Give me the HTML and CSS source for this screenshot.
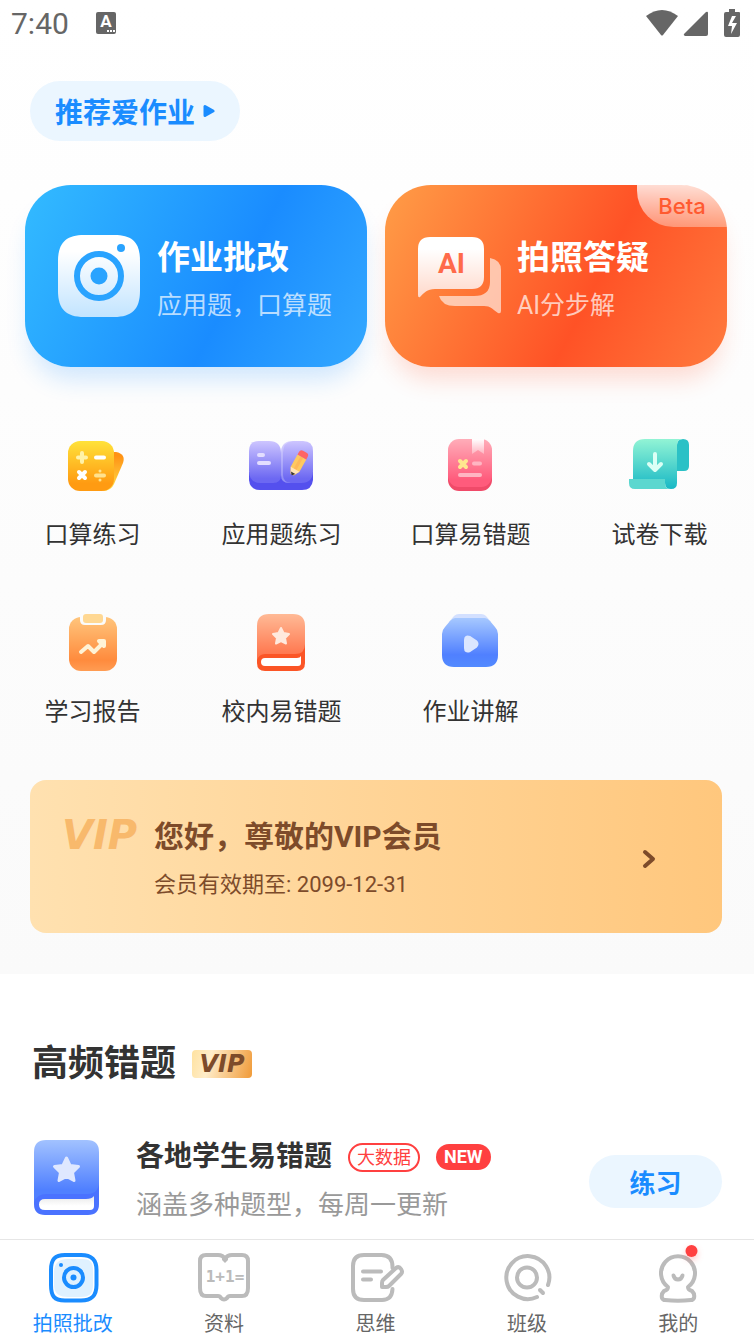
FILE: index.html
```html
<!DOCTYPE html>
<html lang="zh-CN">
<head>
    <meta charset="UTF-8">
    <meta name="viewport" content="width=device-width, initial-scale=1.0">
    <title>爱作业</title>
    <link rel="stylesheet" href="styles.css">
</head>
<body>
    <div class="top">
        <div class="status-bar">
            <span class="clock">7:40</span>
            <svg class="status-app" width="20" height="24" viewBox="0 0 20 24">
                <rect x="0" y="1" width="20" height="22" rx="2" fill="#666"/>
                <text x="10" y="16" text-anchor="middle" class="app-letter">A</text>
                <path d="M11 20h2M14 20h2M17 20h2" stroke="#fff" stroke-width="2"/>
            </svg>
            <svg class="status-icons" width="96" height="30" viewBox="0 0 96 30">
                <path d="M0 8Q16 -4 32 8L17 27q-1 1-2 0z" fill="#666"/>
                <path d="M62 5v21q0 2-2 2H39q-2-1-1-2L60 4q2-1 2 1z" fill="#666"/>
                <path d="M83 1h6v3h4q1 0 1 1v22q0 2-2 2H80q-2 0-2-2V6q0-2 2-2h3z" fill="#666"/>
                <path d="M86 8l-4 10h4l-1 8 6-11h-5l4-7z" fill="#fff"/>
            </svg>
        </div>

        <header class="header">
            <button class="recommend">推荐爱作业
                <svg width="12" height="14" viewBox="0 0 12 14"><path d="M2 2.500v9L10 7z" fill="#1a8cff" stroke="#1a8cff" stroke-width="3" stroke-linejoin="round"/></svg>
            </button>
        </header>

        <div class="cards">
            <button class="card card-blue">
                <svg width="84" height="84" viewBox="0 0 84 84">
                    <defs>
                        <linearGradient id="camFill" x1="0" y1="0" x2="0" y2="1">
                            <stop offset="0.2" stop-color="#fff"/>
                            <stop offset="1" stop-color="#c2e4ff"/>
                        </linearGradient>
                    </defs>
                    <path d="M27 1h30c19 0 26 8 26 26v30c0 18-8 26-26 26H27C9 83 1 75 1 57V27C1 9 9 1 27 1z" fill="url(#camFill)"/>
                    <circle cx="42" cy="42" r="22" fill="none" stroke="#29a3ff" stroke-width="6"/>
                    <circle cx="42" cy="42" r="8.500" fill="#29a3ff"/>
                    <circle cx="64" cy="14" r="4" fill="#29a3ff"/>
                </svg>
                <span class="card-text">
                    <span class="card-title">作业批改</span>
                    <span class="card-sub">应用题，口算题</span>
                </span>
            </button>
            <button class="card card-orange">
                <svg width="84" height="84" viewBox="0 0 84 84">
                    <defs>
                        <linearGradient id="chatFill" x1="0" y1="0" x2="0" y2="1">
                            <stop offset="0.2" stop-color="#fff"/>
                            <stop offset="1" stop-color="#ffd9cb"/>
                        </linearGradient>
                    </defs>
                    <path d="M73 24q11 2 11 12v41q0 3-3 2c-6-4-7-7-14-7H38q-13 0-16-10h35q16 0 16-14z" fill="#fff" fill-opacity="0.6"/>
                    <path d="M13 3h42q12 0 12 12v28q0 12-12 12H18C10 55 7 59 3 63q-2 1-2-2V15Q1 3 13 3z" fill="url(#chatFill)"/>
                    <text x="34.500" y="39" text-anchor="middle" class="ai-letters">AI</text>
                </svg>
                <span class="card-text">
                    <span class="card-title">拍照答疑</span>
                    <span class="card-sub">AI分步解</span>
                </span>
                <span class="beta">Beta</span>
            </button>
        </div>

        <nav class="tools">
            <a class="tool" href="#">
                <svg width="72" height="64" viewBox="-2 0 72 64">
                    <defs>
                        <linearGradient id="calc" x1="0" y1="0" x2="0" y2="1">
                            <stop offset="0" stop-color="#ffe23a"/>
                            <stop offset="0.850" stop-color="#ff9b12"/>
                        </linearGradient>
                        <linearGradient id="calcBack" x1="0" y1="0" x2="0" y2="1">
                            <stop offset="0.100" stop-color="#ff9214"/>
                            <stop offset="1" stop-color="#ffe04a"/>
                        </linearGradient>
                    </defs>
                    <path d="M54 18h3q10 2 7 11l-9 21q-3 7-11 7z" fill="url(#calcBack)"/>
                    <rect x="9" y="7" width="46" height="50" rx="12" fill="url(#calc)"/>
                    <g stroke-width="4" stroke-linecap="round" fill="none">
                        <path d="M23 19v9M19 23.500h8" stroke="#fff2a8"/>
                        <path d="M37 23.500h8M20 38l6 6M26 38l-6 6" stroke="#fff"/>
                        <path d="M37 41.500h8" stroke="#ffe28f"/>
                    </g>
                    <circle cx="41" cy="37" r="1.500" fill="#ffe28f"/>
                    <circle cx="41" cy="46" r="1.500" fill="#ffe28f"/>
                </svg>
                <span>口算练习</span>
            </a>
            <a class="tool" href="#">
                <svg width="72" height="64" viewBox="-1 0 72 64">
                    <defs>
                        <linearGradient id="note" x1="0" y1="0" x2="0" y2="1">
                            <stop offset="0" stop-color="#cdc5ff"/>
                            <stop offset="0.900" stop-color="#6c68f2"/>
                        </linearGradient>
                    </defs>
                    <path d="M2 38h64v8q-1 10-11 10H13Q3 56 2 46z" fill="#5450ee"/>
                    <path d="M12 7h10q12 0 12 12v22q0 8-8 8H14Q2 49 2 37V17Q2 7 12 7z" fill="url(#note)"/>
                    <path d="M46 7h10q10 0 10 10v20q0 12-12 12H42q-8 0-8-8V19q0-12 12-12z" fill="url(#note)"/>
                    <path d="M34 19v22q0 8 8 8h2q-8-1-8-8V19q0-11 10-12-12 0-12 12z" fill="#fff" fill-opacity="0.25"/>
                    <path d="M12 21h4M12 29h10" stroke="#e3deff" stroke-width="4" stroke-linecap="round"/>
                    <g transform="rotate(29 51 30)">
                        <path d="M46 22h10v14l-3 6h-4l-3-6z" fill="#ffc95f"/>
                        <path d="M49.500 22h3v14h-3z" fill="#ffb95a"/>
                        <path d="M46 36h10l-3 5h-4z" fill="#ffe5b8"/>
                        <path d="M48.500 40h5l-2.500 3z" fill="#333"/>
                        <path d="M46 22v-3q0-3 3-3h4q3 0 3 3v3z" fill="#ff6464"/>
                    </g>
                </svg>
                <span>应用题练习</span>
            </a>
            <a class="tool" href="#">
                <svg width="72" height="64" viewBox="0 0 72 64">
                    <defs>
                        <linearGradient id="pink" x1="0" y1="0" x2="0" y2="1">
                            <stop offset="0" stop-color="#ffadb9"/>
                            <stop offset="0.850" stop-color="#ff5b7c"/>
                        </linearGradient>
                        <linearGradient id="ribbon" x1="0" y1="0" x2="0" y2="1">
                            <stop offset="0" stop-color="#fff"/>
                            <stop offset="1" stop-color="#ffb3c0"/>
                        </linearGradient>
                    </defs>
                    <rect x="13" y="20" width="44" height="37" rx="11" fill="#f04a69"/>
                    <rect x="13" y="5" width="44" height="48" rx="11" fill="url(#pink)"/>
                    <path d="M37 5h12v15l-6-4-6 4z" fill="url(#ribbon)"/>
                    <path d="M25 27l6 6M31 27l-6 6" stroke="#ffe78f" stroke-width="4" stroke-linecap="round"/>
                    <path d="M39 29.500h6M25 41h20" stroke="#ffb5c2" stroke-width="4" stroke-linecap="round"/>
                </svg>
                <span>口算易错题</span>
            </a>
            <a class="tool" href="#">
                <svg width="72" height="64" viewBox="0 0 72 64">
                    <defs>
                        <linearGradient id="scroll" x1="0" y1="0" x2="0" y2="1">
                            <stop offset="0" stop-color="#92f4d5"/>
                            <stop offset="1" stop-color="#18b8c5"/>
                        </linearGradient>
                    </defs>
                    <path d="M59 5q6 0 6 6v21q0 5-5 5h-7V11q0-6 6-6z" fill="#2bc1c6"/>
                    <path d="M21 5h38q-6 0-6 6v38q0 6-6 6t-6-6v-4H9V17Q9 5 21 5z" fill="url(#scroll)"/>
                    <path d="M5 45h36v4q0 6 6 6H11q-6 0-6-6z" fill="#5bd7cf"/>
                    <path d="M31 20v15M25 30l6 6 6-6" fill="none" stroke="#dbfff5" stroke-width="4" stroke-linecap="round" stroke-linejoin="round"/>
                </svg>
                <span>试卷下载</span>
            </a>
            <a class="tool" href="#">
                <svg width="72" height="64" viewBox="-2 0 72 64">
                    <defs>
                        <linearGradient id="board" x1="0" y1="0" x2="0" y2="1">
                            <stop offset="0" stop-color="#ffc57c"/>
                            <stop offset="0.800" stop-color="#ff8b3d"/>
                            <stop offset="1" stop-color="#ff9c53"/>
                        </linearGradient>
                    </defs>
                    <rect x="10" y="6" width="48" height="54" rx="12" fill="url(#board)"/>
                    <path d="M21 5h26v4q0 5-5 5H26q-5 0-5-5z" fill="#fbfbfb"/>
                    <rect x="24" y="3" width="20" height="9" rx="3" fill="#ffd893"/>
                    <path d="M22 41l7-6 6 6 9-9" fill="none" stroke="#fff3d6" stroke-width="4" stroke-linecap="round" stroke-linejoin="round"/>
                    <path d="M40 30h5v5z" fill="#fff3d6" stroke="#fff3d6" stroke-width="4" stroke-linejoin="round"/>
                </svg>
                <span>学习报告</span>
            </a>
            <a class="tool" href="#">
                <svg width="72" height="64" viewBox="-1 0 72 64">
                    <defs>
                        <linearGradient id="redBook" x1="0" y1="0" x2="0" y2="1">
                            <stop offset="0" stop-color="#ffba96"/>
                            <stop offset="1" stop-color="#ff6e45"/>
                        </linearGradient>
                    </defs>
                    <path d="M10 30h48v22q0 8-8 8H18q-8 0-8-8z" fill="#fb5526"/>
                    <path d="M22 3h24q12 0 12 12v18q0 10-10 10H18q-6 0-8 6V15Q10 3 22 3z" fill="url(#redBook)"/>
                    <path d="M18 47h32q3 0 4-2v7q0 3-3 3H18q-4 0-4-4t4-4z" fill="#fff"/>
                    <path d="M34 17l2.500 5 5.500 1-4 4 1 5.500-5-2.500-5 2.500 1-5.500-4-4 5.500-1z" fill="#ffe9de" stroke="#ffe9de" stroke-width="2" stroke-linejoin="round"/>
                </svg>
                <span>校内易错题</span>
            </a>
            <a class="tool" href="#">
                <svg width="72" height="64" viewBox="0 0 72 64">
                    <defs>
                        <linearGradient id="video" x1="0" y1="0" x2="0" y2="1">
                            <stop offset="0" stop-color="#a6c8ff"/>
                            <stop offset="0.750" stop-color="#5080ff"/>
                            <stop offset="1" stop-color="#528aff"/>
                        </linearGradient>
                    </defs>
                    <path d="M24 3h22q3 0 5 2l5 6H14l5-6q2-2 5-2z" fill="#d3e0ff"/>
                    <path d="M20 7h30q2 0 5 3l5 6q3 3 3 7v21q0 12-12 12H19Q7 56 7 44V23q0-4 3-7l5-6q3-3 5-3z" fill="url(#video)"/>
                    <path d="M30 29q0-5 5-3l6 4q3 3 0 6l-6 4q-5 2-5-3z" fill="#dbe6ff" stroke="#dbe6ff" stroke-width="2" stroke-linejoin="round"/>
                </svg>
                <span>作业讲解</span>
            </a>
        </nav>

        <a class="vip-card" href="#">
            <span class="vip-logo">VIP</span>
            <span class="vip-text">
                <span class="vip-title">您好，尊敬的VIP会员</span>
                <span class="vip-date">会员有效期至: 2099-12-31</span>
            </span>
            <svg width="14" height="20" viewBox="0 0 14 20"><path d="M3 3l8 7-8 7" fill="none" stroke="#7d4b2a" stroke-width="4" stroke-linecap="round" stroke-linejoin="round"/></svg>
        </a>
    </div>

    <section class="mistakes">
        <h2>高频错题 <span class="vip-badge">VIP</span></h2>
        <div class="item">
            <svg class="item-icon" width="66" height="76" viewBox="0 0 66 76">
                <defs>
                    <linearGradient id="blueBook" x1="0" y1="0" x2="0" y2="1">
                        <stop offset="0" stop-color="#a2c2ff"/>
                        <stop offset="0.800" stop-color="#5080ff"/>
                    </linearGradient>
                    <linearGradient id="pages" x1="0" y1="0" x2="0" y2="1">
                        <stop offset="0" stop-color="#e8e8e8"/>
                        <stop offset="0.700" stop-color="#fff"/>
                    </linearGradient>
                </defs>
                <path d="M0 36h65v28q0 11-11 11H11Q0 75 0 64z" fill="#4a72ff"/>
                <path d="M12 0h41q12 0 12 12v30q0 12-12 12H12Q3 54 0 62V12Q0 0 12 0z" fill="url(#blueBook)"/>
                <path d="M11 59h41q6 0 8-3v10q0 4-4 4H11q-6 0-6-5.500t6-5.500z" fill="url(#pages)"/>
                <path d="M32.500 18l3.500 7.500 8.500 1-6 6 1.500 8-7.500-4-7.500 4 1.500-8-6-6 8.500-1z" fill="#dfe8ff" stroke="#dfe8ff" stroke-width="3" stroke-linejoin="round"/>
            </svg>
            <div class="item-text">
                <div class="item-title">
                    <h3>各地学生易错题</h3>
                    <span class="tag">大数据</span>
                    <span class="tag-new">NEW</span>
                </div>
                <p>涵盖多种题型，每周一更新</p>
            </div>
            <button class="practice">练习</button>
        </div>
    </section>

    <nav class="tab-bar">
        <a class="tab active" href="#">
            <svg width="56" height="56" viewBox="0 0 56 56">
                <path d="M20 5h16c11 0 15.500 5 15.500 15v15c0 11-5 15.500-15.500 15.500H20C9 50.500 6 46 6 35V20C6 9 10 5 20 5z" fill="#fff" stroke="#1a8cff" stroke-width="4"/>
                <path d="M23 9h14c8 0 11 3 11 11v15c0 9-4 12-12 12H23c-8 0-14-3-14-12V22C9 13 14 9 23 9z" fill="#dff1ff"/>
                <circle cx="28.500" cy="27.500" r="9.500" fill="none" stroke="#1a8cff" stroke-width="4"/>
                <circle cx="28.500" cy="27.500" r="3" fill="#1a8cff"/>
                <circle cx="16" cy="15" r="2" fill="#1a8cff"/>
            </svg>
            <span>拍照批改</span>
        </a>
        <a class="tab" href="#">
            <svg width="56" height="56" viewBox="0 0 56 56">
                <path d="M10 5h12q5 0 7 4 2-4 7-4h10q6 0 6 6v27q0 8-6 8H34q-2 0-3 2-3 3-6 0-1-2-3-2H10q-6 0-6-8V11q0-6 6-6z" fill="none" stroke="#bbb" stroke-width="4" stroke-linejoin="round"/>
                <path d="M26 6h6v4l-3 3-3-3z" fill="#bbb"/>
                <text x="29" y="32" text-anchor="middle" class="sum">1+1=</text>
            </svg>
            <span>资料</span>
        </a>
        <a class="tab" href="#">
            <svg width="56" height="56" viewBox="0 0 56 56" fill="none" stroke="#bbb" stroke-width="4" stroke-linecap="round" stroke-linejoin="round">
                <path d="M45.500 18v-1q0-12-11-12H17Q6 5 6 16v23q0 11 11 11h18q10 0 10.500-11"/>
                <path d="M49 18q3-2 5 1t0 5L42 36q-1 1-3 1h-4v-4q0-2 1-3z"/>
                <path d="M16 21.500h18M16 29.500h8"/>
            </svg>
            <span>思维</span>
        </a>
        <a class="tab" href="#">
            <svg width="56" height="56" viewBox="0 0 56 56" fill="none" stroke="#bbb" stroke-width="4" stroke-linecap="round">
                <path d="M49 35A21.500 21.500 0 1 0 38 47"/>
                <circle cx="28" cy="27.500" r="10"/>
                <path d="M41 40l3 3"/>
            </svg>
            <span>班级</span>
        </a>
        <a class="tab" href="#">
            <svg width="60" height="56" viewBox="0 0 60 56">
                <path d="M20 37A17 17 0 1 1 40 37q0 3 4 4 3 3 2 7-1 2-3 2Q30 51.500 17 50q-2 0-3-2-1-4 2-7 4-1 4-4z" fill="none" stroke="#bbb" stroke-width="4" stroke-linejoin="round"/>
                <path d="M25.500 25.500q1 4 4.500 4t4.500-4" fill="none" stroke="#bbb" stroke-width="4" stroke-linecap="round"/>
                <circle cx="43.500" cy="1" r="6" fill="#ff4040" class="tab-dot"/>
            </svg>
            <span>我的</span>
        </a>
    </nav>
</body>
</html>
```
FILE: styles.css
```css
* {
    box-sizing: border-box;
}
body {
    font-family: Roboto, "Noto Sans CJK SC", sans-serif;
    color: #333;
    background-color: #fff;
    margin: 0;
    min-height: 100vh;
    display: flex;
    flex-direction: column;
    overflow-x: hidden;
}
a {
    color: inherit;
    text-decoration: none;
}
button {
    font-family: inherit;
    border: none;
    padding: 0;
    cursor: pointer;
}
svg {
    display: block;
    flex: none;
}
.top {
    background: linear-gradient(#fff, #fafafa);
    padding-bottom: 41px;
}

/* status bar */
.status-bar {
    display: flex;
    align-items: center;
    height: 46px;
    padding: 0 12px 0 11px;
}
.clock {
    padding-top: 2px;
    font-size: 30px;
    line-height: 44px;
    color: #666;
}
.status-app {
    margin-left: 27px;
}
.app-letter {
    font: bold 17px Roboto, sans-serif;
    fill: #fff;
}
.status-icons {
    margin-left: auto;
}

.header {
    display: flex;
    padding: 35px 30px 44px;
}
.recommend {
    display: flex;
    align-items: center;
    justify-content: center;
    gap: 8px;
    width: 210px;
    height: 60px;
    border-radius: 30px;
    background-color: #ebf6ff;
    color: #1a8cff;
    font-size: 28px;
    font-weight: bold;
}

/* big cards */
.cards {
    display: grid;
    grid-template-columns: 1fr 1fr;
    gap: 18px;
    padding: 0 27px 0 25px;
}
.card {
    position: relative;
    display: flex;
    align-items: center;
    gap: 16px;
    height: 182px;
    padding: 0 32px;
    border-radius: 46px;
    color: #fff;
    text-align: left;
}
.card-blue {
    background: linear-gradient(117deg, #33bbff, #1a8cff 60%, #33a8ff);
    box-shadow: 0 18px 24px -6px rgba(26, 140, 255, 0.2);
}
.card-orange {
    background: linear-gradient(117deg, #ff9d47, #ff5226 60%, #ff7a3d);
    box-shadow: 0 18px 24px -6px rgba(255, 82, 38, 0.2);
}
.card-text {
    display: flex;
    flex-direction: column;
    gap: 12px;
    padding-top: 7px;
    white-space: nowrap;
}
.card-title {
    font-size: 33px;
    font-weight: bold;
    line-height: 40px;
}
.card-sub {
    font-size: 25px;
    line-height: 32px;
    color: rgba(255, 255, 255, 0.7);
}
.ai-letters {
    font: bold 28px Roboto, sans-serif;
    fill: #ff6a4a;
}
.beta {
    position: absolute;
    top: 0;
    right: 0;
    width: 90px;
    height: 42px;
    border-radius: 0 46px 0 40px;
    background: linear-gradient(rgba(255, 255, 255, 0.8), rgba(255, 255, 255, 0.35));
    color: #ff5a30;
    font-family: Inter, sans-serif;
    font-size: 22px;
    font-weight: 500;
    line-height: 42px;
    text-align: center;
}

/* tools */
.tools {
    display: grid;
    grid-template-columns: repeat(4, 1fr);
    row-gap: 60px;
    margin-left: -2px;
    padding-top: 67px;
}
.tool {
    display: flex;
    flex-direction: column;
    align-items: center;
    gap: 21px;
    font-size: 24px;
    line-height: 32px;
}

/* vip */
.vip-card {
    display: flex;
    align-items: center;
    margin: 52px 32px 0 30px;
    padding: 39px 66px 34px 32px;
    border-radius: 16px;
    background: linear-gradient(90deg, #ffe1b0, #ffc77d);
    color: #7d4b2a;
}
.vip-logo, .vip-badge {
    font-family: "DejaVu Sans", sans-serif;
    font-weight: bold;
    font-style: italic;
}
.vip-logo {
    align-self: flex-start;
    width: 92px;
    font-size: 40px;
    line-height: 32px;
    color: #f8b96c;
}
.vip-text {
    flex: 1;
    display: flex;
    flex-direction: column;
    gap: 16px;
}
.vip-title {
    font-size: 30px;
    font-weight: bold;
    line-height: 36px;
}
.vip-date {
    font-size: 22px;
    line-height: 28px;
}

/* mistakes */
.mistakes {
    padding: 66px 32px 10px;
}
.mistakes h2 {
    display: flex;
    align-items: center;
    gap: 16px;
    margin: 0;
    font-size: 36px;
    font-weight: bold;
    line-height: 48px;
}
.vip-badge {
    width: 60px;
    height: 28px;
    border-radius: 4px;
    background: linear-gradient(105deg, #ffe2a0, #ffedca 30%, #f09a38);
    color: #7d4b2a;
    font-size: 24px;
    line-height: 28px;
    text-align: center;
}
.item {
    display: flex;
    align-items: center;
    margin-top: 45px;
    padding-left: 2px;
}
.item-icon {
    align-self: flex-start;
    margin-top: 7px;
}
.item-text {
    flex: 1;
    margin-left: 36px;
}
.item-title {
    display: flex;
    align-items: center;
    gap: 16px;
}
.item h3 {
    margin: 0;
    font-size: 28px;
    font-weight: bold;
    line-height: 48px;
}
.item p {
    margin: 0;
    font-size: 26px;
    line-height: 48px;
    color: #999;
}
.tag {
    height: 29px;
    padding: 0 7px;
    border: 2px solid #ff4040;
    border-radius: 15px;
    color: #ff4040;
    font-size: 18px;
    line-height: 25px;
}
.tag-new {
    height: 26px;
    padding: 0 8px;
    border-radius: 13px;
    background-color: #ff4040;
    color: #fff;
    font-size: 18px;
    font-weight: bold;
    line-height: 26px;
}
.practice {
    width: 133px;
    height: 53px;
    border-radius: 27px;
    background-color: #ebf6ff;
    color: #1a8cff;
    font-size: 26px;
    font-weight: bold;
}

/* bottom tabs */
.tab-bar {
    display: grid;
    grid-template-columns: repeat(5, 1fr);
    margin: auto 0 0 -3px;
    padding: 10px 0 6px;
    border-top: 1px solid #e6e6e6;
    background-color: #fff;
}
.tab {
    display: flex;
    flex-direction: column;
    align-items: center;
    gap: 6px;
    font-size: 20px;
    line-height: 24px;
    color: #666;
}
.tab.active {
    color: #1a8cff;
}
.tab svg {
    overflow: visible;
}
.sum {
    font: bold 16px "DejaVu Sans Mono", monospace;
    fill: #bbb;
}
.tab-dot {
    filter: drop-shadow(0 3px 3px rgba(255, 64, 64, 0.3));
}
```
